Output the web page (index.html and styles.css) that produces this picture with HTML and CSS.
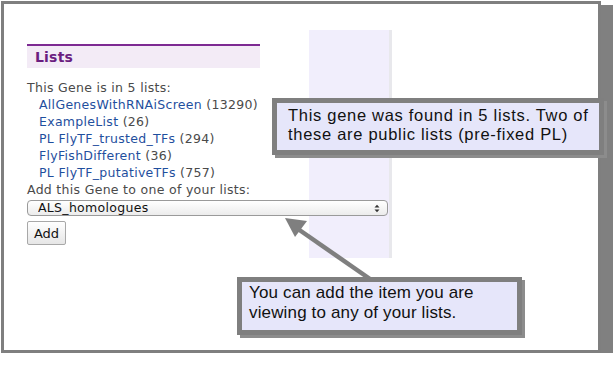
FILE: index.html
```html
<!DOCTYPE html>
<html lang="en">
<head>
    <meta charset="UTF-8">
    <title>Lists</title>
    <link rel="stylesheet" href="styles.css">
</head>
<body>
    <div class="frame">
        <div class="content">
            <div class="panel">
                <h2 class="panel-title">Lists</h2>
                <div class="lists">
                    <p>This Gene is in 5 lists:</p>
                    <ul>
                        <li><a href="#">AllGenesWithRNAiScreen</a> (13290)</li>
                        <li><a href="#">ExampleList</a> (26)</li>
                        <li><a href="#">PL FlyTF_trusted_TFs</a> (294)</li>
                        <li><a href="#">FlyFishDifferent</a> (36)</li>
                        <li><a href="#">PL FlyTF_putativeTFs</a> (757)</li>
                    </ul>
                    <p>Add this Gene to one of your lists:</p>
                    <div class="select-wrap">
                        <select class="select">
                            <option>ALS_homologues</option>
                        </select>
                        <svg class="select-arrows" width="6" height="9" viewBox="0 0 6 9">
                            <path d="M0.5 3.5 L3 0.8 L5.5 3.5 Z M0.5 5.5 L3 8.2 L5.5 5.5 Z" fill="#333"/>
                        </svg>
                    </div>
                    <button class="add-btn">Add</button>
                </div>
            </div>
            <div class="side"></div>
        </div>

        <svg class="pointer" width="120" height="80" viewBox="0 0 120 80">
            <line x1="108" y1="72" x2="36" y2="22" stroke="#7f7f7f" stroke-width="4.5"/>
            <polygon points="23,11 45,14 33,30" fill="#7f7f7f"/>
        </svg>

        <div class="callout callout-lists">
            This gene was found in 5 lists. Two of<br>
            these are public lists (pre-fixed PL)
        </div>
        <div class="callout callout-add">
            You can add the item you are<br>
            viewing to any of your lists.
        </div>
    </div>
</body>
</html>
```

FILE: styles.css
```css
body {
    margin: 0;
    background: white;
    font-family: "DejaVu Sans", Verdana, sans-serif;
}
.frame {
    position: relative;
    margin: 1px 0 0 1px;
    width: 594px;
    height: 346px;
    border: 3px solid #7f7f7f;
    background: white;
    box-shadow: 8px 8px 0 4px #808080;
}
.content {
    display: flex;
    padding: 26px 0 0 23px;
}
.panel {
    width: 282px;
    padding-top: 14px;
}
.panel-title {
    width: 225px;
    margin: 0;
    padding-left: 8px;
    height: 22px;
    line-height: 22px;
    border-top: 2px solid #7d2a92;
    background: #f3ebf6;
    color: #6b1d80;
    font-size: 14px;
    font-weight: bold;
    letter-spacing: 0.2px;
}
.lists {
    margin-top: 11px;
    font-size: 12.5px;
    letter-spacing: 0.3px;
    line-height: 17px;
    color: #4a4a4a;
    white-space: nowrap;
}
.lists p {
    margin: 0;
}
.lists ul {
    list-style: none;
    margin: 0;
    padding-left: 12px;
}
.lists a {
    color: #1f4f9e;
    text-decoration: none;
}
.select-wrap {
    position: relative;
    width: 361px;
    margin-top: 2px;
}
.select {
    appearance: none;
    -webkit-appearance: none;
    display: block;
    width: 100%;
    height: 16px;
    padding: 0 0 0 10px;
    border: 1px solid #9a9a9a;
    border-radius: 4px;
    background: linear-gradient(#ffffff, #ececec);
    font-family: "DejaVu Sans", Verdana, sans-serif;
    font-size: 12.5px;
    letter-spacing: 0.3px;
    line-height: 14px;
    color: #111;
}
.select-arrows {
    position: absolute;
    right: 8px;
    top: 4px;
}
.add-btn {
    display: block;
    margin-top: 5px;
    width: 39px;
    height: 24px;
    padding: 0;
    border: 1px solid #a8a8a8;
    border-radius: 2px;
    background: linear-gradient(#ffffff, #e6e6e6);
    font-family: "DejaVu Sans", Verdana, sans-serif;
    font-size: 13px;
    color: #111;
}
.side {
    width: 80px;
    height: 228px;
    background: #f1eefc;
    border-right: 3px solid #e8e8ec;
}
.pointer {
    position: absolute;
    left: 258px;
    top: 203px;
}
.callout {
    position: absolute;
    background: #e6e6fa;
    border: 5px solid #7f7f7f;
    box-shadow: 3px 3px 0 #8c8c8c;
    font-family: "Liberation Sans", Arial, sans-serif;
    color: #111;
    white-space: nowrap;
}
.callout-lists {
    left: 268px;
    top: 94px;
    width: 301px;
    padding: 3px 10px 6px 11px;
    font-size: 16.5px;
    line-height: 19px;
    letter-spacing: 0.7px;
}
.callout-add {
    left: 233px;
    top: 273px;
    width: 262px;
    padding: 1px 6px 7px 7px;
    font-size: 17px;
    line-height: 20px;
    letter-spacing: 0.15px;
}
```
